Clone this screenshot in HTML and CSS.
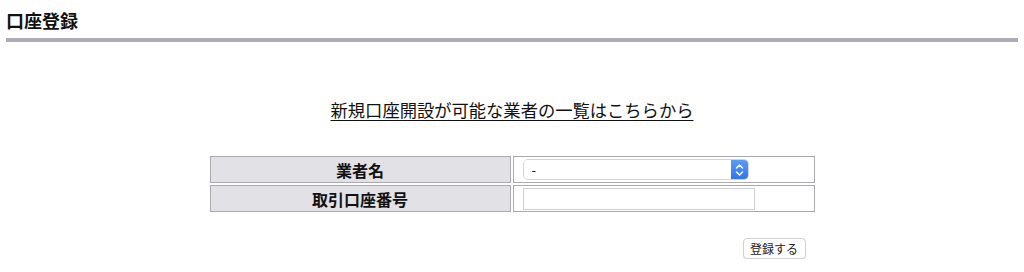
FILE: index.html
```html
<!DOCTYPE html>
<html>
<head>
	<meta charset="utf-8">
	<title>口座登録</title>
	<link rel="stylesheet" href="styles.css">
</head>
<body>
	<div class="page">
		<h1 class="page-title">口座登録</h1>
		<div class="title-bar"></div>

		<p class="open-link"><a href="#">新規口座開設が可能な業者の一覧はこちらから</a></p>

		<form class="account-form">
			<table class="form-table">
				<tr>
					<th>業者名</th>
					<td>
						<div class="select-wrap">
							<select name="broker">
								<option>-</option>
							</select>
							<span class="select-arrow">
								<svg width="9" height="14" viewBox="0 0 9 14"><path d="M1.5 5 L4.5 2 L7.5 5 M1.5 9 L4.5 12 L7.5 9" fill="none" stroke="#fff" stroke-width="1.5" stroke-linecap="round" stroke-linejoin="round"/></svg>
							</span>
						</div>
					</td>
				</tr>
				<tr>
					<th>取引口座番号</th>
					<td><input type="text" name="account_no" class="text-input"></td>
				</tr>
			</table>
			<div class="button-row">
				<button type="button" class="submit-button">登録する</button>
			</div>
		</form>
	</div>
</body>
</html>
```

FILE: styles.css
```css
body {
	margin: 0;
	background-color: #fff;
	color: #111;
	font-family: "Noto Sans CJK JP", "Noto Sans", sans-serif;
}
.page {
	padding: 0 6px;
}
.page-title {
	margin: 0;
	padding-top: 8px;
	font-size: 18px;
	line-height: 24px;
	font-weight: bold;
}
.title-bar {
	margin-top: 6px;
	height: 4px;
	background-color: #acadb6;
}
.open-link {
	margin: 56px 0 0;
	text-align: center;
	font-size: 17.3px;
	line-height: 24px;
}
.open-link a {
	color: #111;
	text-decoration: underline;
	text-underline-offset: 3px;
}
.account-form {
	width: 609px;
	margin: 32px auto 0;
}
.form-table {
	width: 609px;
	border-spacing: 2px;
	table-layout: fixed;
}
.form-table th,
.form-table td {
	height: 27px;
	box-sizing: border-box;
	border: 1px solid #a9a9ae;
	padding: 0 9px;
	vertical-align: middle;
}
.form-table th {
	width: 301px;
	background-color: #e1e1e6;
	font-size: 16px;
	line-height: 20px;
	font-weight: bold;
	text-align: center;
}
.form-table td {
	background-color: #fff;
}
.select-wrap {
	display: flex;
	width: 226px;
	height: 21px;
	box-sizing: border-box;
	border: 1px solid #d4d4d8;
	border-radius: 5px;
	overflow: hidden;
}
.select-wrap select {
	flex: 1;
	appearance: none;
	-webkit-appearance: none;
	border: none;
	outline: none;
	background: #fff;
	padding: 0 0 0 8px;
	font-family: "Noto Sans CJK JP", "Noto Sans", sans-serif;
	font-size: 13px;
	color: #111;
}
.select-arrow {
	display: flex;
	align-items: center;
	justify-content: center;
	width: 17px;
	background: linear-gradient(#5a9cf8, #2f74f0);
}
.text-input {
	display: block;
	width: 232px;
	height: 22px;
	box-sizing: border-box;
	border: 1px solid #cfcfd3;
	padding: 0 4px;
	font-size: 13px;
}
.button-row {
	display: flex;
	justify-content: flex-end;
	margin-top: 24px;
	padding-right: 11px;
}
.submit-button {
	width: 63px;
	height: 21px;
	padding: 0;
	border: 1px solid #d0d0d4;
	border-radius: 4px;
	background-color: #fff;
	box-shadow: 0 1px 1px rgba(0,0,0,0.08);
	font-family: "Noto Sans CJK JP", "Noto Sans", sans-serif;
	font-size: 12px;
	line-height: 19px;
	color: #222;
}
```
